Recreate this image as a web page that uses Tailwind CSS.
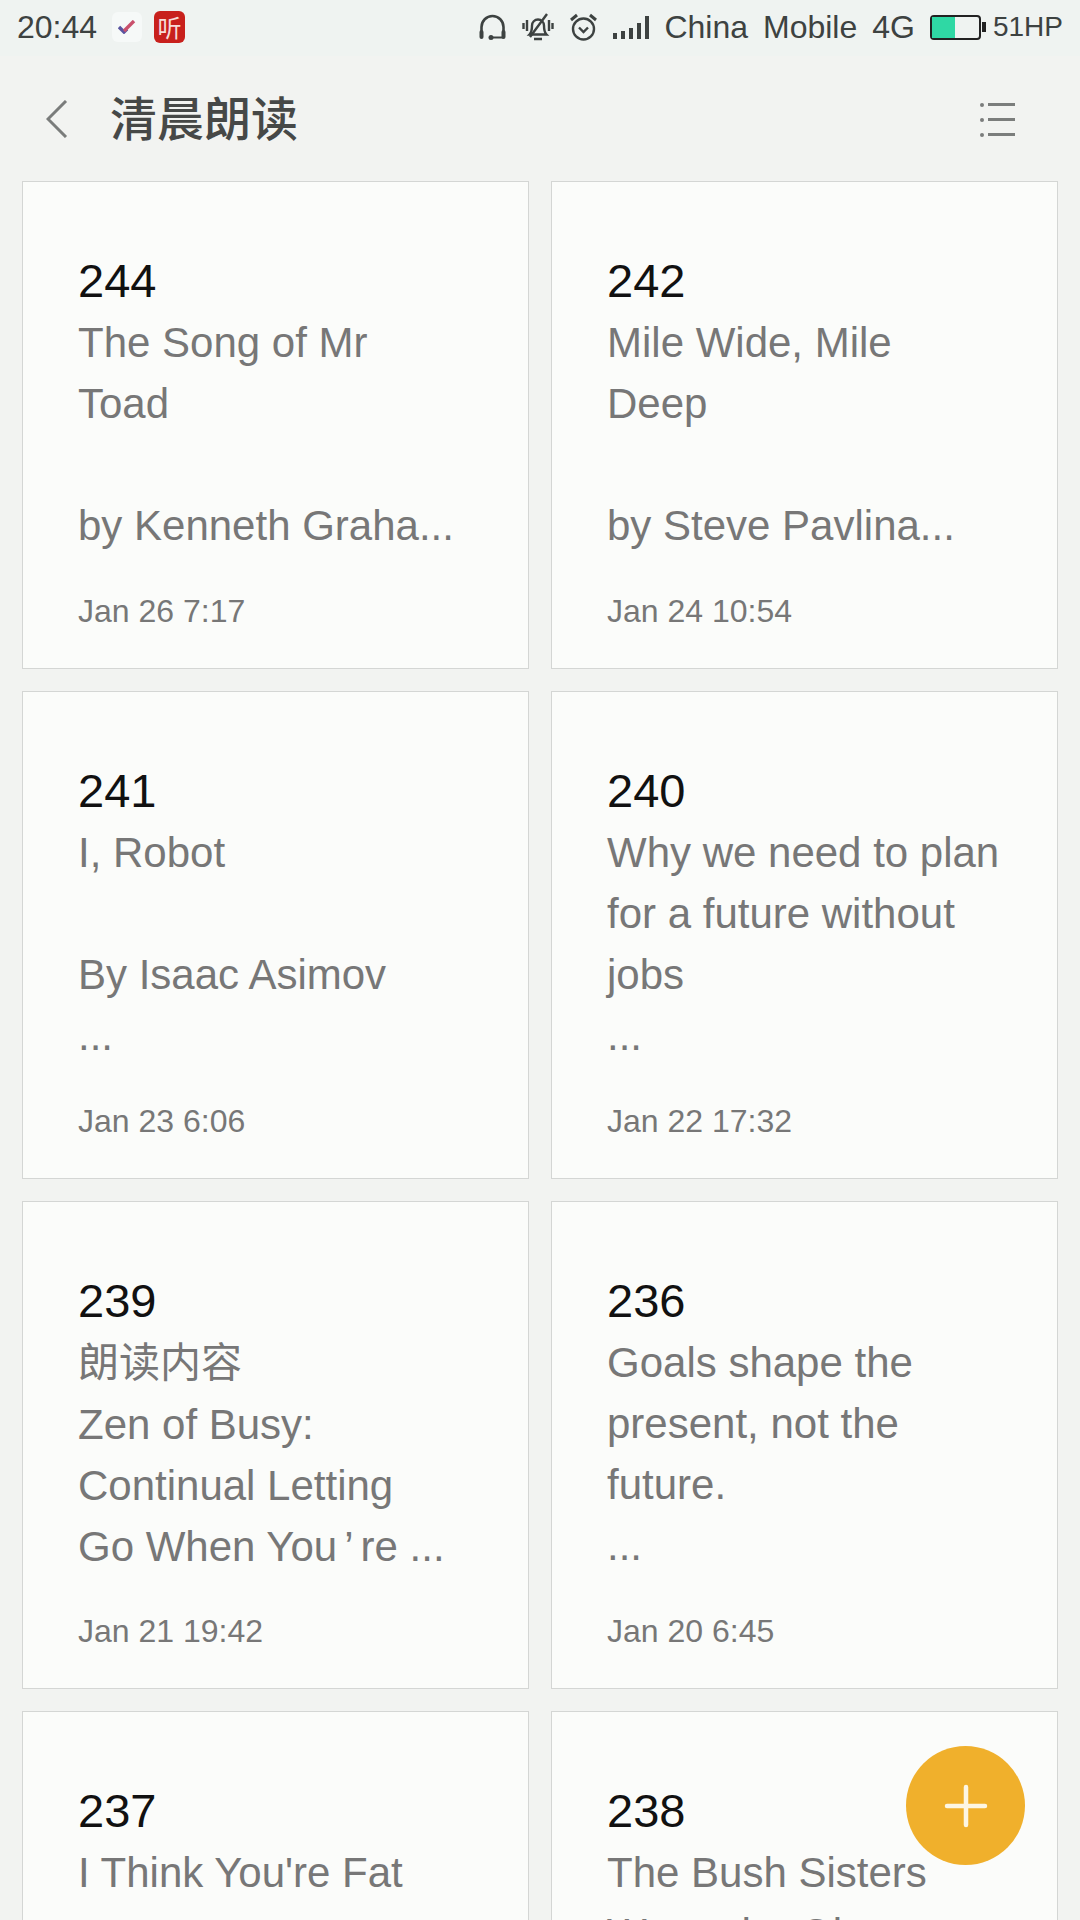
<!DOCTYPE html>
<html lang="en">
<head>
  <meta charset="UTF-8" />
  <meta name="viewport" content="width=device-width, initial-scale=1.0"/>
  <title>清晨朗读</title>
  <script src="https://cdn.jsdelivr.net/npm/@tailwindcss/browser@4"></script>
</head>
<body class="bg-[#f2f3f1] font-['Liberation_Sans','Noto_Sans_CJK_SC',sans-serif]">
  <div class="relative h-[1920px] w-[1080px] overflow-hidden">

    <!-- status bar -->
    <div class="flex h-[56px] items-center bg-[#eff3f1] pb-[2px] pl-[17px] pr-[17px] text-[#3d4241]">
      <span class="text-[32px] leading-none">20:44</span>
      <div class="ml-[15px] flex size-[30px] items-center justify-center rounded-[6px] bg-[#f6f9f8]">
        <svg width="18" height="14" viewBox="0 0 18 14" fill="none">
          <path d="M1 7l5 5 3-3" stroke="#5a55a0" stroke-width="3.4"/>
          <path d="M6 11l10-10" stroke="#c9506c" stroke-width="3.4"/>
        </svg>
      </div>
      <div class="ml-[12px] flex h-[32px] w-[31px] items-center justify-center rounded-[6px] bg-[#c8201c] font-['Noto_Sans_CJK_SC'] text-[24px] leading-none text-[#f6dcd8]">听</div>
      <div class="ml-auto flex items-center">
        <svg width="29" height="26" viewBox="0 0 29 26" fill="none" stroke="#3d4241" stroke-width="2.6">
          <path d="M3.5 19V13a11 11 0 0 1 22 0v6"/>
          <rect x="1.5" y="16" width="4" height="9" rx="2" fill="#3d4241" stroke="none"/>
          <rect x="23.5" y="16" width="4" height="9" rx="2" fill="#3d4241" stroke="none"/>
          <path d="M13 23.5h12" stroke-width="2"/>
          <circle cx="13" cy="23.5" r="2.5" fill="#3d4241" stroke="none"/>
        </svg>
        <svg class="ml-[15px]" width="32" height="28" viewBox="0 0 32 28" fill="none" stroke="#3d4241" stroke-width="2.4">
          <path d="M7.5 21.5c2-2 2.5-4 2.5-9a6 6 0 0 1 12 0c0 5 .5 7 2.5 9z"/>
          <path d="M12 26h8M25 1L8 24"/>
          <path d="M1.5 10v6M5 7v11M27 7v11M30.5 10v6"/>
        </svg>
        <svg class="ml-[15px]" width="29" height="28" viewBox="0 0 29 28" fill="none" stroke="#3d4241" stroke-width="2.4">
          <circle cx="14.5" cy="16" r="10.5"/>
          <path d="M10 14.5l4.5 4.5 4.5-4.5"/>
          <path d="M2 7l6-5M27 7l-6-5" stroke-width="3"/>
        </svg>
        <div class="ml-[15px] flex h-[23px] items-end gap-[4px]">
          <span class="h-[6px] w-[4px] bg-[#3d4241]"></span>
          <span class="h-[8px] w-[4px] bg-[#3d4241]"></span>
          <span class="h-[11px] w-[4px] bg-[#3d4241]"></span>
          <span class="h-[16px] w-[4px] bg-[#3d4241]"></span>
          <span class="h-[23px] w-[4px] bg-[#3d4241]"></span>
        </div>
        <span class="ml-[15px] text-[32px] leading-none">China</span>
        <span class="ml-[15px] text-[32px] leading-none">Mobile</span>
        <span class="ml-[15px] text-[32px] leading-none">4G</span>
        <div class="relative ml-[15px] h-[25px] w-[51px] rounded-[4px] border-[2.5px] border-[#222]">
          <div class="h-full w-[23px] bg-[#2fd8a4]"></div>
          <div class="absolute right-[-7px] top-[5px] h-[10px] w-[4px] bg-[#222]"></div>
        </div>
        <span class="ml-[12px] text-[28px] leading-none">51HP</span>
      </div>
    </div>

    <!-- title bar -->
    <div class="flex h-[125px] items-center pl-[46px] pr-[65px]">
      <svg width="22" height="38" viewBox="0 0 22 38" fill="none" stroke="#7a7c7b" stroke-width="3">
        <path d="M20 1L2 19l18 18"/>
      </svg>
      <h1 class="mb-[6px] ml-[42px] font-['Noto_Sans_CJK_SC'] text-[47px] leading-none font-medium text-[#464847]">清晨朗读</h1>
      <div class="ml-auto mt-[2px] flex flex-col gap-[11px]">
        <div class="flex items-center gap-[4px]"><span class="size-[4px] rounded-full bg-[#7b7d7c]"></span><span class="h-[3px] w-[27px] bg-[#7b7d7c]"></span></div>
        <div class="flex items-center gap-[4px]"><span class="size-[4px] rounded-full bg-[#7b7d7c]"></span><span class="h-[3px] w-[27px] bg-[#7b7d7c]"></span></div>
        <div class="flex items-center gap-[4px]"><span class="size-[4px] rounded-full bg-[#7b7d7c]"></span><span class="h-[3px] w-[27px] bg-[#7b7d7c]"></span></div>
      </div>
    </div>

    <!-- notes -->
    <div class="grid grid-cols-[507px_507px] gap-x-[22px] gap-y-[22px] pl-[22px]">

      <div class="h-[488px] border border-[#d4d6d4] bg-[#fbfcfa] pl-[55px] pt-[68px]">
        <div class="text-[47px] leading-[62px] text-[#111]">244</div>
        <div class="h-[244px] text-[42px] leading-[61px] text-[#777]">The Song of Mr<br>Toad<br><br>by Kenneth Graha...</div>
        <div class="mt-[35px] text-[32px] leading-[40px] text-[#777]">Jan 26 7:17</div>
      </div>

      <div class="h-[488px] border border-[#d4d6d4] bg-[#fbfcfa] pl-[55px] pt-[68px]">
        <div class="text-[47px] leading-[62px] text-[#111]">242</div>
        <div class="h-[244px] text-[42px] leading-[61px] text-[#777]">Mile Wide, Mile<br>Deep<br><br>by Steve Pavlina...</div>
        <div class="mt-[35px] text-[32px] leading-[40px] text-[#777]">Jan 24 10:54</div>
      </div>

      <div class="h-[488px] border border-[#d4d6d4] bg-[#fbfcfa] pl-[55px] pt-[68px]">
        <div class="text-[47px] leading-[62px] text-[#111]">241</div>
        <div class="h-[244px] text-[42px] leading-[61px] text-[#777]">I, Robot<br><br>By Isaac Asimov<br>...</div>
        <div class="mt-[35px] text-[32px] leading-[40px] text-[#777]">Jan 23 6:06</div>
      </div>

      <div class="h-[488px] border border-[#d4d6d4] bg-[#fbfcfa] pl-[55px] pt-[68px]">
        <div class="text-[47px] leading-[62px] text-[#111]">240</div>
        <div class="h-[244px] text-[42px] leading-[61px] text-[#777]">Why we need to plan<br>for a future without<br>jobs<br>...</div>
        <div class="mt-[35px] text-[32px] leading-[40px] text-[#777]">Jan 22 17:32</div>
      </div>

      <div class="h-[488px] border border-[#d4d6d4] bg-[#fbfcfa] pl-[55px] pt-[68px]">
        <div class="text-[47px] leading-[62px] text-[#111]">239</div>
        <div class="h-[244px] text-[42px] leading-[61px] text-[#777]"><span class="text-[41px]">朗读内容</span><br>Zen of Busy:<br>Continual Letting<br>Go When You<span class="mx-[7px]">’</span>re ...</div>
        <div class="mt-[35px] text-[32px] leading-[40px] text-[#777]">Jan 21 19:42</div>
      </div>

      <div class="h-[488px] border border-[#d4d6d4] bg-[#fbfcfa] pl-[55px] pt-[68px]">
        <div class="text-[47px] leading-[62px] text-[#111]">236</div>
        <div class="h-[244px] text-[42px] leading-[61px] text-[#777]">Goals shape the<br>present, not the<br>future.<br>...</div>
        <div class="mt-[35px] text-[32px] leading-[40px] text-[#777]">Jan 20 6:45</div>
      </div>

      <div class="h-[488px] border border-[#d4d6d4] bg-[#fbfcfa] pl-[55px] pt-[68px]">
        <div class="text-[47px] leading-[62px] text-[#111]">237</div>
        <div class="h-[244px] text-[42px] leading-[61px] text-[#777]">I Think You're Fat</div>
      </div>

      <div class="h-[488px] border border-[#d4d6d4] bg-[#fbfcfa] pl-[55px] pt-[68px]">
        <div class="text-[47px] leading-[62px] text-[#111]">238</div>
        <div class="h-[244px] text-[42px] leading-[61px] text-[#777]">The Bush Sisters<br>Wrote the Ol...</div>
      </div>
    </div>

    <!-- add button -->
    <div class="absolute left-[906px] top-[1746px] flex size-[119px] items-center justify-center rounded-full bg-[#f0b02c]">
      <svg width="44" height="44" viewBox="0 0 44 44" fill="none" stroke="#fdf6e3" stroke-width="4.5" stroke-linecap="round">
        <path d="M22 3v38M3 22h38"/>
      </svg>
    </div>
  </div>
</body>
</html>
